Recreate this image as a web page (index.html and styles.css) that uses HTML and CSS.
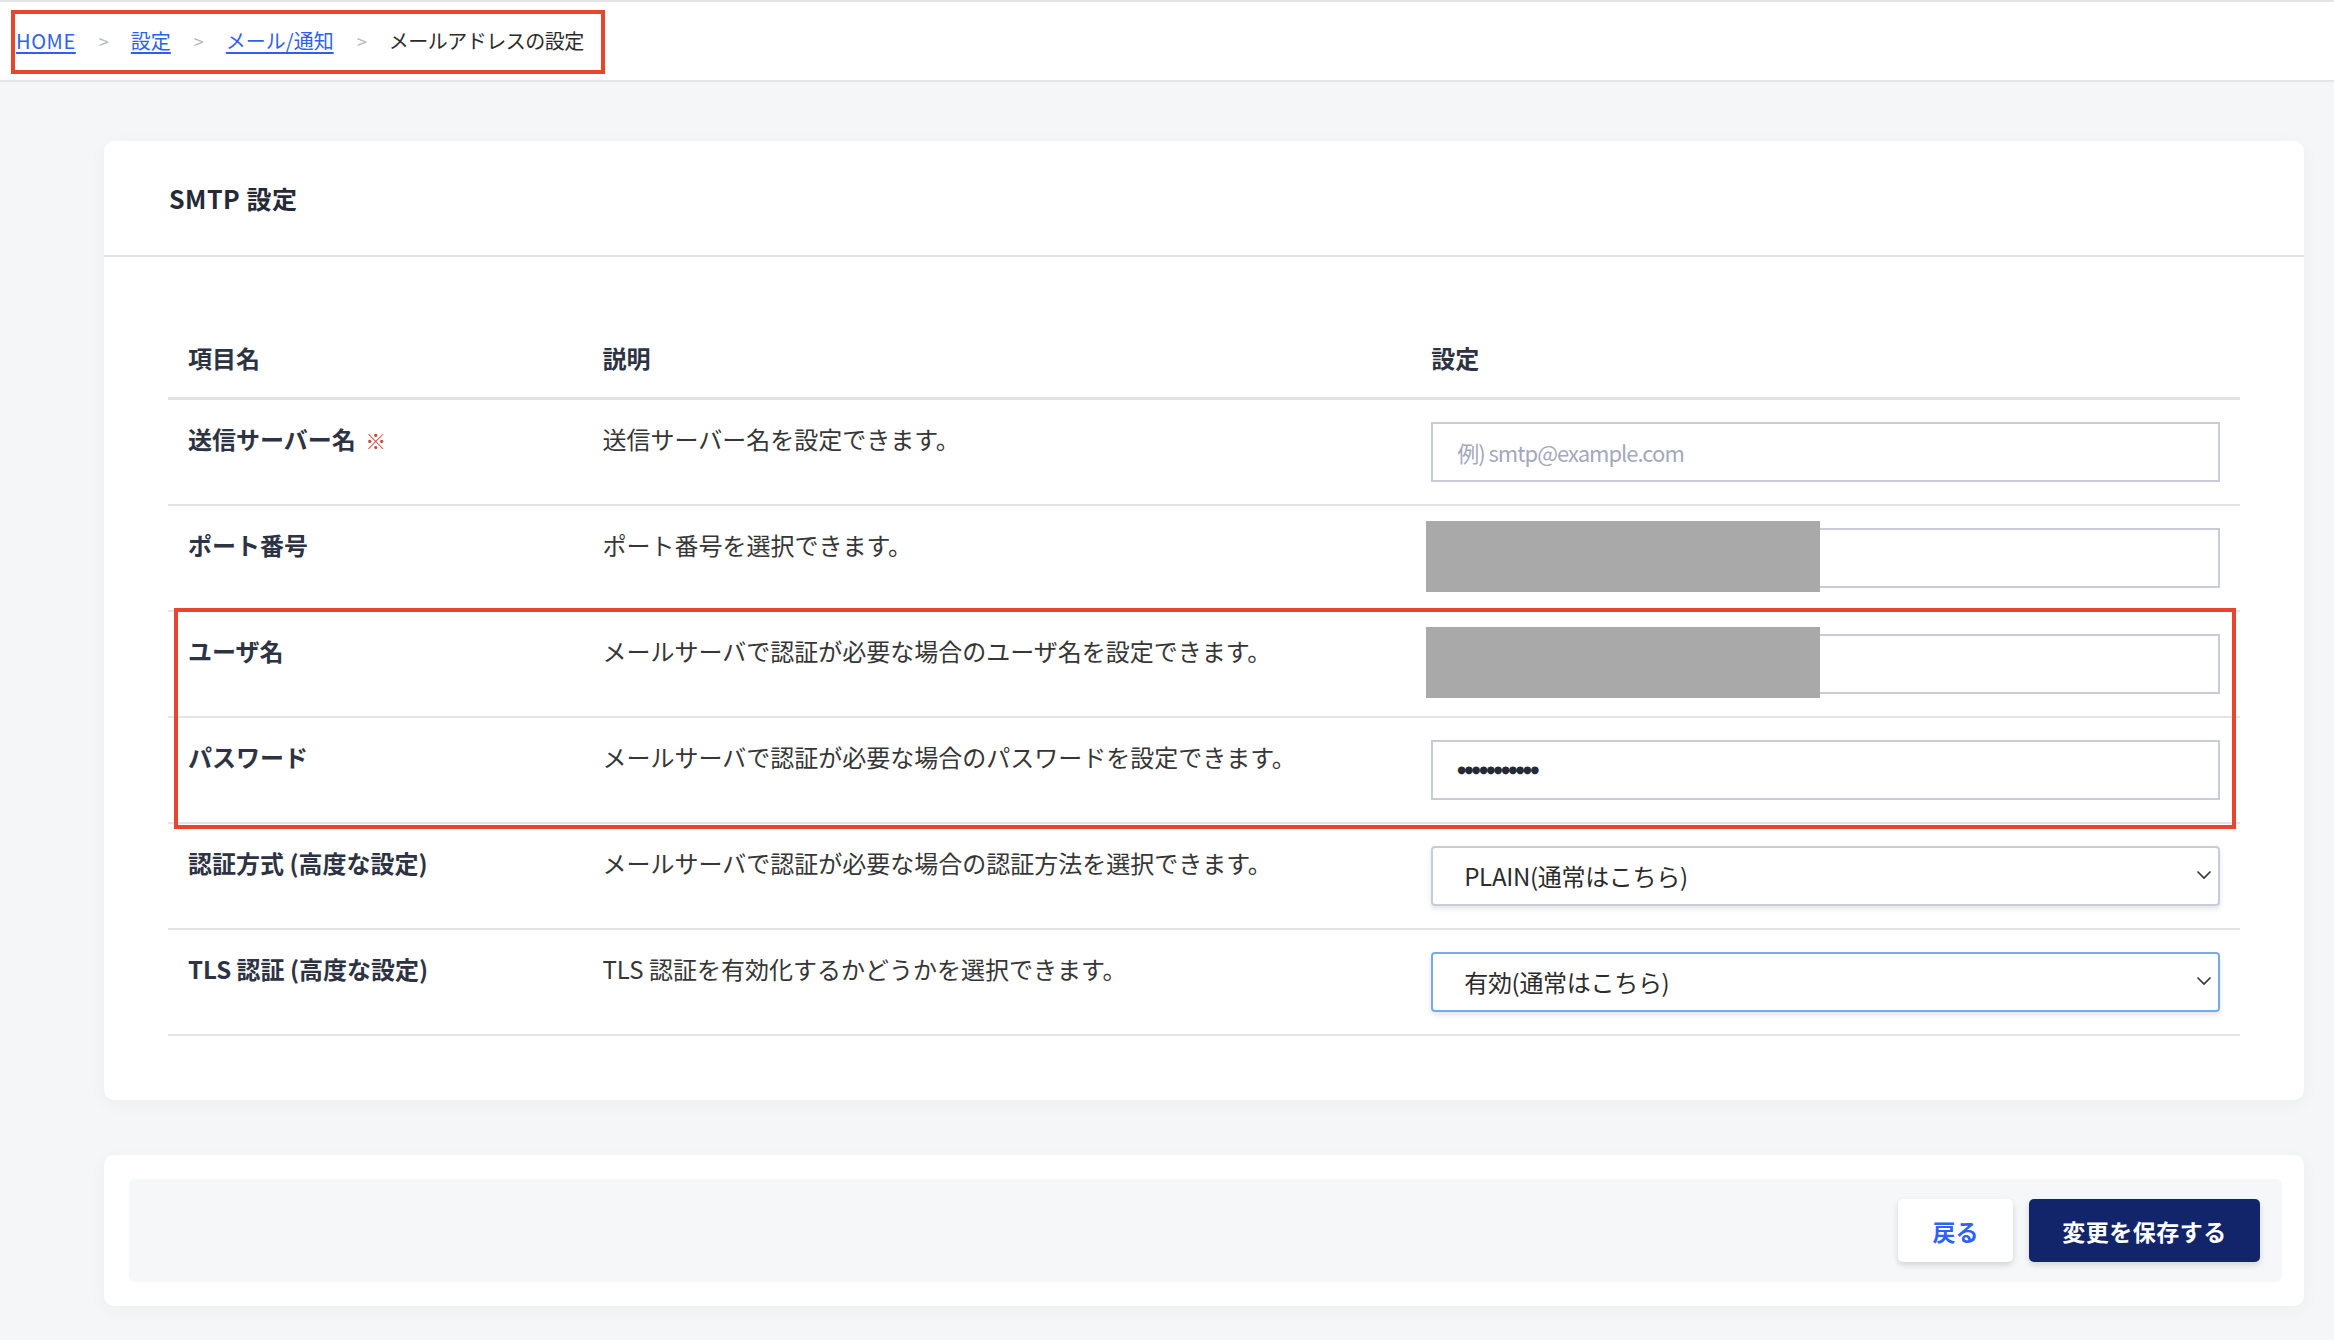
FILE: index.html
```html
<!DOCTYPE html>
<html lang="ja">
<head>
<meta charset="utf-8">
<title>メールアドレスの設定</title>
<link rel="stylesheet" href="styles.css">
</head>
<body>
<header class="topbar">
  <nav class="crumbs">
    <a href="#" class="crumb-link crumb-home">HOME</a>
    <span class="crumb-sep">&gt;</span>
    <a href="#" class="crumb-link">設定</a>
    <span class="crumb-sep">&gt;</span>
    <a href="#" class="crumb-link">メール/通知</a>
    <span class="crumb-sep">&gt;</span>
    <span class="crumb-current">メールアドレスの設定</span>
  </nav>
  <div class="annot annot-crumbs"></div>
</header>

<main class="main">
  <section class="card">
    <div class="card-head">SMTP 設定</div>
    <div class="card-body">
      <table class="settings">
        <colgroup>
          <col class="c1"><col class="c2"><col class="c3">
        </colgroup>
        <thead>
          <tr><th>項目名</th><th>説明</th><th>設定</th></tr>
        </thead>
        <tbody>
          <tr>
            <td class="lbl">送信サーバー名 <span class="req">※</span></td>
            <td class="desc">送信サーバー名を設定できます。</td>
            <td class="ctl"><input class="field" type="text" placeholder="例) smtp@example.com"></td>
          </tr>
          <tr>
            <td class="lbl">ポート番号</td>
            <td class="desc">ポート番号を選択できます。</td>
            <td class="ctl"><input class="field" type="text"><div class="redact"></div></td>
          </tr>
          <tr>
            <td class="lbl">ユーザ名</td>
            <td class="desc">メールサーバで認証が必要な場合のユーザ名を設定できます。</td>
            <td class="ctl"><input class="field" type="text"><div class="redact"></div></td>
          </tr>
          <tr>
            <td class="lbl">パスワード</td>
            <td class="desc">メールサーバで認証が必要な場合のパスワードを設定できます。</td>
            <td class="ctl"><div class="field pw"><span class="dots">●●●●●●●●●●●</span></div></td>
          </tr>
          <tr>
            <td class="lbl">認証方式 (高度な設定)</td>
            <td class="desc">メールサーバで認証が必要な場合の認証方法を選択できます。</td>
            <td class="ctl">
              <div class="sel">
                <span class="sel-text">PLAIN(通常はこちら)</span>
                <svg class="chev" width="16" height="10" viewBox="0 0 16 10"><path d="M1.5 1.5 L8 8 L14.5 1.5" fill="none" stroke="#333" stroke-width="1.6"/></svg>
              </div>
            </td>
          </tr>
          <tr>
            <td class="lbl">TLS 認証 (高度な設定)</td>
            <td class="desc">TLS 認証を有効化するかどうかを選択できます。</td>
            <td class="ctl">
              <div class="sel sel-focus">
                <span class="sel-text">有効(通常はこちら)</span>
                <svg class="chev" width="16" height="10" viewBox="0 0 16 10"><path d="M1.5 1.5 L8 8 L14.5 1.5" fill="none" stroke="#333" stroke-width="1.6"/></svg>
              </div>
            </td>
          </tr>
        </tbody>
      </table>
    </div>
    <div class="annot annot-table"></div>
  </section>

  <section class="card card-actions">
    <div class="actions">
      <button class="btn btn-back">戻る</button>
      <button class="btn btn-save">変更を保存する</button>
    </div>
  </section>
</main>
</body>
</html>
```

FILE: styles.css
```css
* { box-sizing: border-box; }

html, body {
  margin: 0;
  padding: 0;
}

body {
  background: #f5f6f8;
  font-family: "Noto Sans CJK JP", "Noto Sans", sans-serif;
  color: #333;
  width: 2334px;
  min-height: 1340px;
}

.topbar {
  position: relative;
  height: 82px;
  background: #fff;
  border-top: 2px solid #e4e5ea;
  border-bottom: 2px solid #e4e5ea;
  display: flex;
  align-items: center;
  padding-left: 16px;
}

.crumbs {
  display: flex;
  align-items: center;
  font-size: 20px;
  line-height: 30px;
}

.crumb-link {
  color: #2f5ff0;
  text-decoration: underline;
  text-underline-offset: 3px;
}

.crumb-home {
  letter-spacing: 0.6px;
}

.crumb-sep {
  color: #b5b8c4;
  margin: 0 22px 0 23px;
  font-size: 18px;
}

.crumb-current {
  color: #2b2b2b;
  letter-spacing: -0.5px;
}

.annot {
  position: absolute;
  border: 4px solid #e8452c;
  pointer-events: none;
}

.annot-crumbs {
  left: 11px;
  top: 8px;
  width: 594px;
  height: 64px;
}

.main {
  padding: 59px 30px 40px 104px;
  display: flex;
  flex-direction: column;
  gap: 55px;
}

.card {
  position: relative;
  background: #fff;
  border-radius: 10px;
  box-shadow: 0 4px 18px rgba(30, 40, 60, 0.04);
}

.card-head {
  height: 116px;
  border-bottom: 2px solid #e0e0e2;
  padding-left: 65px;
  display: flex;
  align-items: center;
  font-size: 25px;
  font-weight: 700;
  color: #262a36;
  letter-spacing: 0.5px;
}

.card-body {
  padding: 64px;
}

.settings {
  width: 100%;
  border-collapse: collapse;
  table-layout: fixed;
}

.c1 { width: 20%; }
.c2 { width: 40%; }
.c3 { width: 40%; }

.settings th {
  text-align: left;
  font-size: 24px;
  line-height: 36px;
  font-weight: 700;
  color: #2e3344;
  padding: 19px 20px 21px;
  border-bottom: 3px solid #e1e2e8;
}

.settings td {
  vertical-align: top;
  padding: 22px 20px;
  border-bottom: 2px solid #e3e4e9;
  font-size: 24px;
  line-height: 34px;
}

.lbl {
  font-weight: 700;
  color: #2e3344;
}

.req {
  color: #cc4a40;
  font-weight: 400;
  font-size: 21px;
  margin-left: 4px;
}

.desc {
  color: #363636;
  font-size: 23.1px;
}

.ctl {
  position: relative;
}

.field {
  display: block;
  width: 100%;
  height: 60px;
  border: 2px solid #c8cbd8;
  border-radius: 0;
  background: #fff;
  padding: 0 24px;
  font-family: "Noto Sans CJK JP", "Noto Sans", sans-serif;
  font-size: 22px;
  letter-spacing: -1px;
  color: #333;
  outline: none;
}

.field::placeholder {
  color: #a3a8bd;
}

.pw {
  display: flex;
  align-items: center;
  letter-spacing: 0;
}

.dots {
  font-family: "DejaVu Sans", sans-serif;
  font-size: 10px;
  letter-spacing: -1.4px;
  color: #262a36;
  line-height: 1;
}

.redact {
  position: absolute;
  left: 15px;
  top: 15px;
  width: 394px;
  height: 71px;
  background: #a9a9a9;
}

.sel {
  position: relative;
  height: 60px;
  border: 2px solid #c8cbd8;
  border-radius: 4px;
  background: #fff;
  box-shadow: 0 3px 5px rgba(40, 50, 80, 0.12);
  display: flex;
  align-items: center;
  padding-left: 31px;
  font-size: 24px;
  letter-spacing: -0.3px;
  color: #2b2b2b;
}

.sel-focus {
  border-color: #78aae6;
}

.chev {
  position: absolute;
  right: 6px;
  top: 22px;
}

.annot-table {
  left: 70px;
  top: 467px;
  width: 2062px;
  height: 221px;
}

.card-actions {
  padding: 24px 22px 24px 25px;
}

.actions {
  background: #f6f7f9;
  border-radius: 6px;
  padding: 20px 22px;
  display: flex;
  justify-content: flex-end;
  gap: 16px;
}

.btn {
  height: 63px;
  border: none;
  border-radius: 5px;
  font-family: "Noto Sans CJK JP", "Noto Sans", sans-serif;
  font-size: 23px;
  font-weight: 700;
  box-shadow: 0 3px 6px rgba(0, 0, 0, 0.14);
  cursor: pointer;
}

.btn-back {
  width: 115px;
  background: #fff;
  color: #2f62f2;
}

.btn-save {
  width: 231px;
  background: #13256a;
  color: #fff;
  letter-spacing: 0.5px;
}
```
